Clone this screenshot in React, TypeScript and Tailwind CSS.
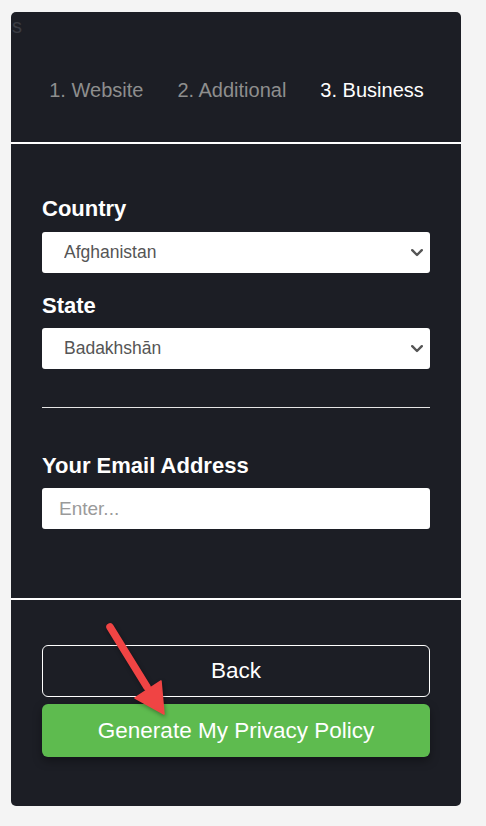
import React from 'react';

const Chevron: React.FC = () => (
  <svg
    className="pointer-events-none absolute right-[7px] top-1/2 -translate-y-1/2"
    width="12"
    height="8"
    viewBox="0 0 12 8"
    fill="none"
  >
    <path d="M1.2 1.2 L6 6 L10.8 1.2" stroke="#555" strokeWidth="2.4" strokeLinecap="round" strokeLinejoin="round" />
  </svg>
);

const SelectField: React.FC<{ value: string }> = ({ value }) => (
  <div className="relative">
    <select
      defaultValue={value}
      className="h-[41px] w-full appearance-none rounded-[3px] bg-white pl-[22px] text-[17.5px] text-[#555] outline-none"
    >
      <option>{value}</option>
    </select>
    <Chevron />
  </div>
);

const App: React.FC = () => {
  return (
    <div
      className="relative h-[826px] w-[486px] overflow-hidden bg-[#f4f4f4] pt-[12px] pl-[11px]"
      style={{ fontFamily: '"Liberation Sans", Arial, sans-serif' }}
    >
      <div className="flex h-[794px] w-[450px] flex-col overflow-hidden rounded-[5px] bg-[#1c1e25]">
        {/* step tabs */}
        <div className="h-[130px]">
          <div className="ml-[1px] mt-[2px] text-[20px] leading-[24px] text-[#3a3c43]">s</div>
          <div className="mt-[40px] flex justify-center gap-[34px] pl-[1px] text-[20px] leading-[24px]">
            <span className="text-[#8e8e8e]">1. Website</span>
            <span className="text-[#8e8e8e]">2. Additional</span>
            <span className="text-white">3. Business</span>
          </div>
        </div>
        <div className="h-[2px] bg-white" />

        {/* form */}
        <div className="h-[454px] px-[31px] pt-[52px]">
          <label className="mb-[10px] block text-[22px] font-bold leading-[26px] text-white">Country</label>
          <SelectField value="Afghanistan" />
          <label className="mb-[9px] mt-[20px] block text-[22px] font-bold leading-[26px] text-white">State</label>
          <SelectField value="Badakhshān" />
          <div className="mt-[38px] h-[1px] bg-[#e5e5e5]" />
          <label className="mb-[9px] mt-[45px] block text-[22px] font-bold leading-[26px] text-white">
            Your Email Address
          </label>
          <input
            type="email"
            placeholder="Enter..."
            className="h-[41px] w-full rounded-[3px] bg-white pl-[17px] text-[19px] text-[#555] outline-none placeholder:text-[#9a9a9a]"
          />
        </div>
        <div className="h-[2px] bg-white" />

        {/* actions */}
        <div className="flex flex-col gap-[7px] px-[31px] pt-[45px]">
          <button className="h-[52px] w-full rounded-[6px] border border-white text-[22.5px] text-white">Back</button>
          <button className="h-[53px] w-full rounded-[6px] bg-[#5ebb4f] text-[22.5px] text-white shadow-[0_4px_10px_rgba(0,0,0,0.35)]">
            Generate My Privacy Policy
          </button>
        </div>
      </div>

      {/* red annotation arrow */}
      <svg
        className="pointer-events-none absolute left-0 top-0"
        width="486"
        height="826"
        viewBox="0 0 486 826"
        style={{ filter: 'drop-shadow(1px 2px 2px rgba(0,0,0,0.35))' }}
      >
        <line x1="110" y1="627" x2="147" y2="687" stroke="#f04444" strokeWidth="7.5" strokeLinecap="round" />
        <polygon points="135,698 161,681 164,714" fill="#f04444" stroke="#f04444" strokeWidth="1.5" strokeLinejoin="round" />
      </svg>
    </div>
  );
};

export default App;
